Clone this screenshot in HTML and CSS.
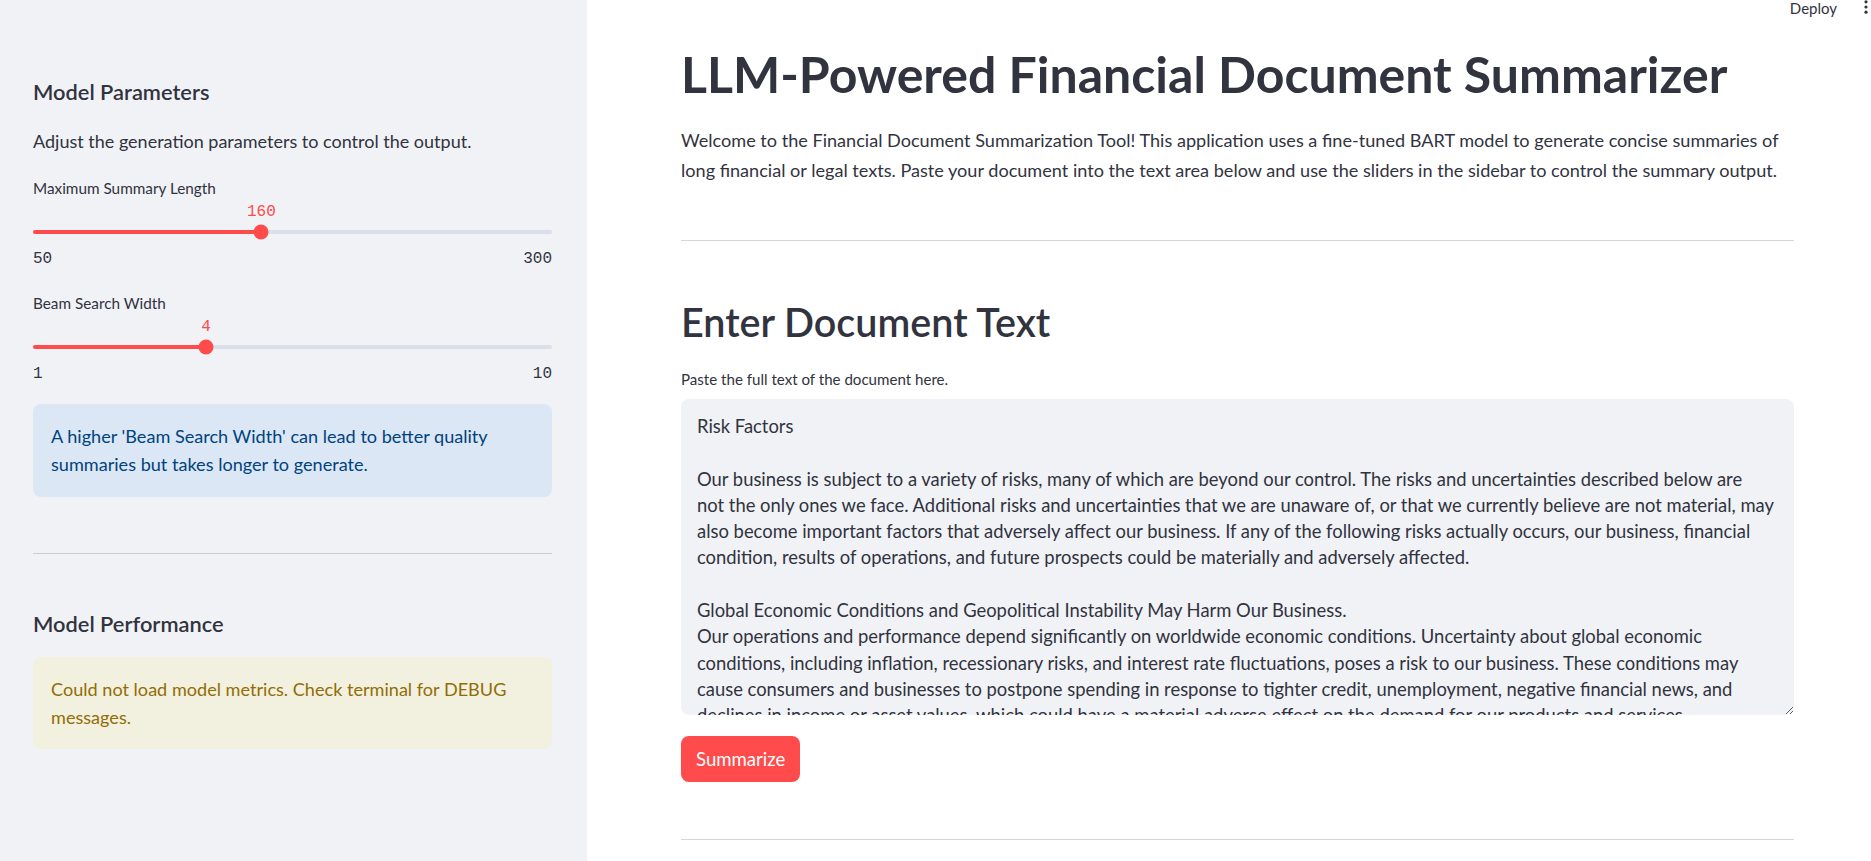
FILE: index.html
```html
<!DOCTYPE html>
<html lang="en">
<head>
<meta charset="utf-8">
<title>LLM-Powered Financial Document Summarizer</title>
<link rel="stylesheet" href="styles.css">
</head>
<body>
<div class="app">
  <aside class="sidebar">
    <h3 class="side-heading">Model Parameters</h3>
    <p class="side-text">Adjust the generation parameters to control the output.</p>

    <div class="slider">
      <div class="slider-label">Maximum Summary Length</div>
      <div class="slider-body">
        <div class="track">
          <div class="fill" style="width:44%"></div>
          <div class="thumb" style="left:44%"><span class="thumb-value">160</span></div>
        </div>
      </div>
      <div class="ticks"><span>50</span><span>300</span></div>
    </div>

    <div class="slider slider-next">
      <div class="slider-label">Beam Search Width</div>
      <div class="slider-body">
        <div class="track">
          <div class="fill" style="width:33.333%"></div>
          <div class="thumb" style="left:33.333%"><span class="thumb-value">4</span></div>
        </div>
      </div>
      <div class="ticks"><span>1</span><span>10</span></div>
    </div>

    <div class="alert alert-info">A higher 'Beam Search Width' can lead to better quality summaries but takes longer to generate.</div>

    <hr class="side-rule">

    <h3 class="side-heading perf-heading">Model Performance</h3>
    <div class="alert alert-warn">Could not load model metrics. Check terminal for DEBUG messages.</div>
  </aside>

  <main class="main">
    <div class="toolbar">
      <span class="deploy">Deploy</span>
      <svg class="kebab" width="4" height="16" viewBox="0 0 4 16" aria-hidden="true">
        <circle cx="2" cy="1.8" r="1.6"/>
        <circle cx="2" cy="7" r="1.6"/>
        <circle cx="2" cy="12.2" r="1.6"/>
      </svg>
    </div>

    <h1 class="title">LLM-Powered Financial Document Summarizer</h1>
    <p class="intro">Welcome to the Financial Document Summarization Tool! This application uses a fine-tuned BART model to generate concise summaries of long financial or legal texts. Paste your document into the text area below and use the sliders in the sidebar to control the summary output.</p>

    <hr class="rule">

    <h2 class="section-title">Enter Document Text</h2>
    <label class="field-label" for="doc">Paste the full text of the document here.</label>
    <textarea id="doc" class="doc-input" wrap="off">
Risk Factors

Our business is subject to a variety of risks, many of which are beyond our control. The risks and uncertainties described below are
not the only ones we face. Additional risks and uncertainties that we are unaware of, or that we currently believe are not material, may
also become important factors that adversely affect our business. If any of the following risks actually occurs, our business, financial
condition, results of operations, and future prospects could be materially and adversely affected.

Global Economic Conditions and Geopolitical Instability May Harm Our Business.
Our operations and performance depend significantly on worldwide economic conditions. Uncertainty about global economic
conditions, including inflation, recessionary risks, and interest rate fluctuations, poses a risk to our business. These conditions may
cause consumers and businesses to postpone spending in response to tighter credit, unemployment, negative financial news, and
declines in income or asset values, which could have a material adverse effect on the demand for our products and services.</textarea>

    <button class="btn-primary" type="button">Summarize</button>

    <hr class="rule rule-bottom">
  </main>
</div>
</body>
</html>
```

FILE: styles.css
```css
html, body {
  margin: 0;
  padding: 0;
}

body {
  font-family: Lato, "Noto Sans", sans-serif;
  color: #31333f;
  background: #ffffff;
  overflow: hidden;
}

.app {
  display: flex;
  height: 861px;
}

/* ---------- Sidebar ---------- */
.sidebar {
  flex: none;
  width: 587px;
  box-sizing: border-box;
  background: #f0f2f6;
  padding: 77px 35px 0 33px;
  display: flex;
  flex-direction: column;
}

.side-heading {
  margin: 0;
  font-size: 21.8px;
  line-height: 30px;
  font-weight: 600;
  color: #31333f;
}

.side-text {
  margin: 20px 0 0;
  font-size: 18px;
  line-height: 28px;
}

.slider {
  margin-top: 23px;
}

.slider-next {
  margin-top: 24.5px;
}

.slider-label {
  font-size: 15.3px;
  line-height: 20px;
}

.slider-body {
  padding-top: 32px;
}

.track {
  position: relative;
  height: 4px;
  border-radius: 2px;
  background: #dadfe9;
}

.fill {
  height: 100%;
  border-radius: 2px;
  background: #ff4b4b;
}

.thumb {
  position: absolute;
  top: 50%;
  width: 15px;
  height: 15px;
  border-radius: 50%;
  background: #ff4b4b;
  transform: translate(-50%, -50%);
}

.thumb-value {
  position: absolute;
  left: 50%;
  bottom: calc(100% + 5px);
  transform: translateX(-50%);
  font-family: "Liberation Mono", "DejaVu Sans Mono", monospace;
  font-size: 16px;
  line-height: 16px;
  color: #ff4b4b;
  white-space: nowrap;
}

.ticks {
  margin-top: 14.5px;
  display: flex;
  justify-content: space-between;
  font-family: "Liberation Mono", "DejaVu Sans Mono", monospace;
  font-size: 16px;
  line-height: 20px;
  color: #31333f;
}

.alert {
  border-radius: 8px;
  padding: 18px 18px 19px;
  font-size: 18.1px;
  line-height: 28px;
}

.alert-info {
  margin-top: 20.5px;
  background: #dbe7f4;
  color: #004280;
}

.alert-warn {
  margin-top: 18.5px;
  padding-bottom: 18px;
  background: #f2f1df;
  color: #926c05;
}

.side-rule {
  margin: 56px 0 0;
  border: none;
  height: 1px;
  background: #cacdd2;
}

.perf-heading {
  margin-top: 54.5px;
}

/* ---------- Main ---------- */
.main {
  position: relative;
  flex: 1;
  min-width: 0;
  box-sizing: border-box;
  padding: 44px 77px 0 94px;
  display: flex;
  flex-direction: column;
}

.toolbar {
  position: absolute;
  top: 0;
  right: 3px;
  display: flex;
  align-items: flex-start;
  gap: 27px;
}

.deploy {
  font-size: 15px;
  line-height: 16px;
  color: #31333f;
}

.kebab {
  display: block;
  fill: #31333f;
}

.title {
  margin: 0;
  font-size: 50px;
  line-height: 60px;
  font-weight: 700;
  color: #31333f;
}

.intro {
  margin: 21px 0 0;
  font-size: 18.1px;
  line-height: 30px;
}

.rule {
  margin: 55px 0 0;
  border: none;
  height: 1px;
  background: #d6d6d9;
}

.section-title {
  margin: 57px 0 0;
  font-size: 39.5px;
  line-height: 48px;
  font-weight: 600;
  color: #31333f;
}

.field-label {
  display: block;
  margin-top: 23px;
  font-size: 15.1px;
  line-height: 20px;
}

.doc-input {
  display: block;
  margin-top: 10px;
  height: 316px;
  box-sizing: border-box;
  padding: 14px 16px;
  border: none;
  border-radius: 8px;
  background: #f0f2f6;
  color: #31333f;
  font-family: Lato, "Noto Sans", sans-serif;
  font-size: 18.4px;
  line-height: 26.3px;
  white-space: pre;
  overflow: hidden;
  resize: vertical;
  outline: none;
}

.btn-primary {
  align-self: flex-start;
  margin-top: 20.5px;
  height: 46px;
  padding: 0 15px;
  border: none;
  border-radius: 8px;
  background: #ff4b4b;
  color: #ffffff;
  font-family: Lato, "Noto Sans", sans-serif;
  font-size: 18.6px;
}

.rule-bottom {
  margin-top: 57px;
}
```
